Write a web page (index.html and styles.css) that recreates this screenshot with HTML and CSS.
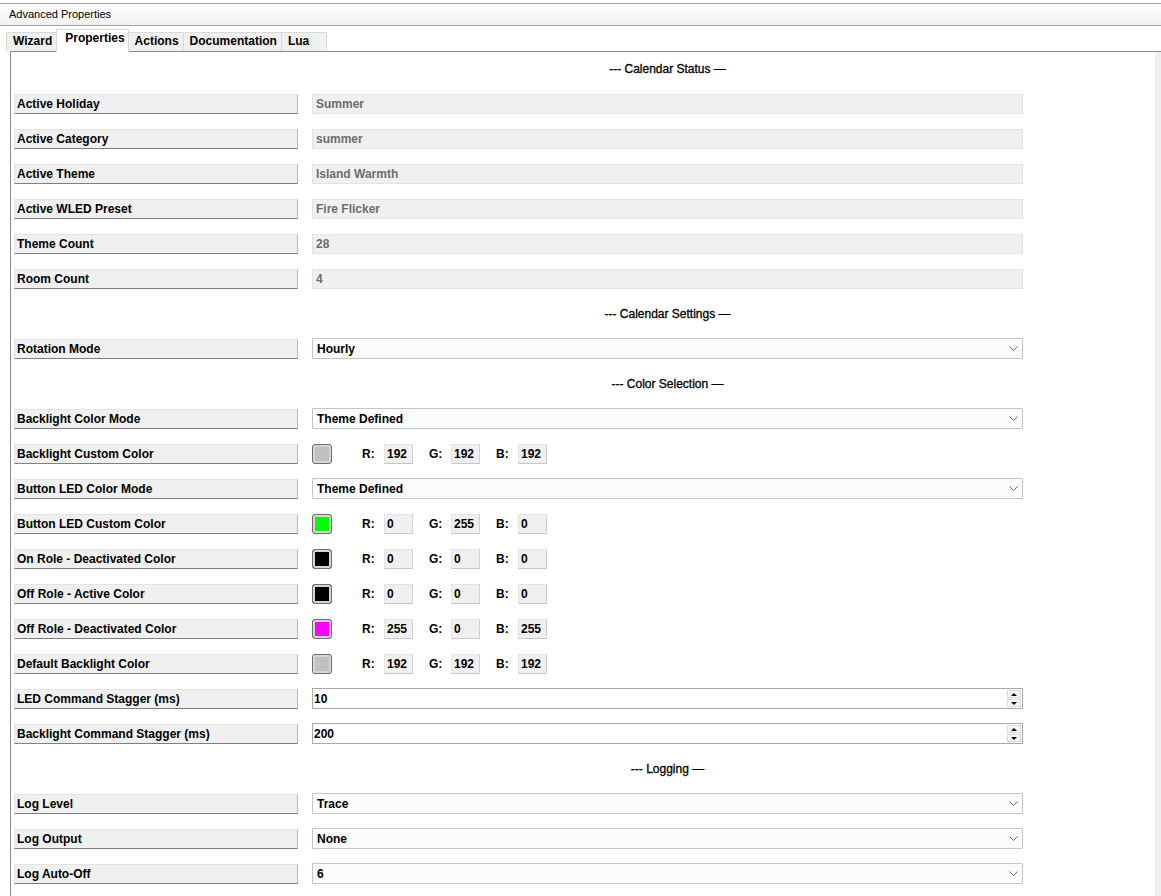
FILE: index.html
```html
<!DOCTYPE html>
<html lang="en">
<head>
  <meta charset="UTF-8" />
  <title>Advanced Properties</title>
  <link rel="stylesheet" href="styles.css">
</head>
<body>
  <div class="titlebar">Advanced Properties</div>

  <div class="tabs">
    <div class="tab">Wizard</div>
    <div class="tab active">Properties</div>
    <div class="tab">Actions</div>
    <div class="tab">Documentation</div>
    <div class="tab tab-lua">Lua</div>
  </div>

  <div class="tabpage">
    <div class="props">
      <!-- Calendar status -->
      <div class="row"><div></div><div class="section">--- Calendar Status —</div></div>
      <div class="row"><div class="label">Active Holiday</div><div class="field">Summer</div></div>
      <div class="row"><div class="label">Active Category</div><div class="field">summer</div></div>
      <div class="row"><div class="label">Active Theme</div><div class="field">Island Warmth</div></div>
      <div class="row"><div class="label">Active WLED Preset</div><div class="field">Fire Flicker</div></div>
      <div class="row"><div class="label">Theme Count</div><div class="field">28</div></div>
      <div class="row"><div class="label">Room Count</div><div class="field">4</div></div>

      <!-- Calendar settings -->
      <div class="row"><div></div><div class="section">--- Calendar Settings —</div></div>
      <div class="row">
        <div class="label">Rotation Mode</div>
        <div class="select"><span>Hourly</span><svg class="chevron" width="9" height="5" viewBox="0 0 9 5"><polyline points="0.5,0.5 4.5,4.5 8.5,0.5" /></svg></div>
      </div>

      <!-- Colors -->
      <div class="row"><div></div><div class="section">--- Color Selection —</div></div>
      <div class="row">
        <div class="label">Backlight Color Mode</div>
        <div class="select"><span>Theme Defined</span><svg class="chevron" width="9" height="5" viewBox="0 0 9 5"><polyline points="0.5,0.5 4.5,4.5 8.5,0.5" /></svg></div>
      </div>
      <div class="row">
        <div class="label">Backlight Custom Color</div>
        <div class="color-value">
          <div class="swatch swatch-silver"></div>
          <span class="ch">R:</span><div class="num">192</div>
          <span class="ch">G:</span><div class="num">192</div>
          <span class="ch">B:</span><div class="num">192</div>
        </div>
      </div>
      <div class="row">
        <div class="label">Button LED Color Mode</div>
        <div class="select"><span>Theme Defined</span><svg class="chevron" width="9" height="5" viewBox="0 0 9 5"><polyline points="0.5,0.5 4.5,4.5 8.5,0.5" /></svg></div>
      </div>
      <div class="row">
        <div class="label">Button LED Custom Color</div>
        <div class="color-value">
          <div class="swatch swatch-green"></div>
          <span class="ch">R:</span><div class="num">0</div>
          <span class="ch">G:</span><div class="num">255</div>
          <span class="ch">B:</span><div class="num">0</div>
        </div>
      </div>
      <div class="row">
        <div class="label">On Role - Deactivated Color</div>
        <div class="color-value">
          <div class="swatch swatch-black"></div>
          <span class="ch">R:</span><div class="num">0</div>
          <span class="ch">G:</span><div class="num">0</div>
          <span class="ch">B:</span><div class="num">0</div>
        </div>
      </div>
      <div class="row">
        <div class="label">Off Role - Active Color</div>
        <div class="color-value">
          <div class="swatch swatch-black"></div>
          <span class="ch">R:</span><div class="num">0</div>
          <span class="ch">G:</span><div class="num">0</div>
          <span class="ch">B:</span><div class="num">0</div>
        </div>
      </div>
      <div class="row">
        <div class="label">Off Role - Deactivated Color</div>
        <div class="color-value">
          <div class="swatch swatch-magenta"></div>
          <span class="ch">R:</span><div class="num">255</div>
          <span class="ch">G:</span><div class="num">0</div>
          <span class="ch">B:</span><div class="num">255</div>
        </div>
      </div>
      <div class="row">
        <div class="label">Default Backlight Color</div>
        <div class="color-value">
          <div class="swatch swatch-silver"></div>
          <span class="ch">R:</span><div class="num">192</div>
          <span class="ch">G:</span><div class="num">192</div>
          <span class="ch">B:</span><div class="num">192</div>
        </div>
      </div>
      <div class="row">
        <div class="label">LED Command Stagger (ms)</div>
        <div class="numeric">
          <span>10</span>
          <div class="spin">
            <div class="spin-btn"><span class="arrow-up"></span></div>
            <div class="spin-btn"><span class="arrow-down"></span></div>
          </div>
        </div>
      </div>
      <div class="row">
        <div class="label">Backlight Command Stagger (ms)</div>
        <div class="numeric">
          <span>200</span>
          <div class="spin">
            <div class="spin-btn"><span class="arrow-up"></span></div>
            <div class="spin-btn"><span class="arrow-down"></span></div>
          </div>
        </div>
      </div>

      <!-- Logging -->
      <div class="row"><div></div><div class="section">--- Logging —</div></div>
      <div class="row">
        <div class="label">Log Level</div>
        <div class="select"><span>Trace</span><svg class="chevron" width="9" height="5" viewBox="0 0 9 5"><polyline points="0.5,0.5 4.5,4.5 8.5,0.5" /></svg></div>
      </div>
      <div class="row">
        <div class="label">Log Output</div>
        <div class="select"><span>None</span><svg class="chevron" width="9" height="5" viewBox="0 0 9 5"><polyline points="0.5,0.5 4.5,4.5 8.5,0.5" /></svg></div>
      </div>
      <div class="row">
        <div class="label">Log Auto-Off</div>
        <div class="select"><span>6</span><svg class="chevron" width="9" height="5" viewBox="0 0 9 5"><polyline points="0.5,0.5 4.5,4.5 8.5,0.5" /></svg></div>
      </div>
    </div>
    <div class="scrollbar"></div>
  </div>
</body>
</html>
```

FILE: styles.css
```css
body {
  margin: 0;
  padding: 0;
  font-family: "Liberation Sans", Arial, sans-serif;
  font-size: 12px;
  color: #000;
  background: #fff;
  height: 896px;
  overflow: hidden;
}

.titlebar {
  margin-top: 3px;
  height: 21px;
  line-height: 21px;
  padding-left: 9px;
  font-size: 11px;
  border-top: 1px solid #a0a0a0;
  border-bottom: 1px solid #a0a0a0;
  background: linear-gradient(#fdfdfd, #f1f1f1);
}

.tabs {
  display: flex;
  align-items: flex-end;
  height: 25px;
  padding-left: 6px;
  position: relative;
  z-index: 2;
}

.tab {
  height: 19px;
  line-height: 17px;
  padding: 0 4px 0 6px;
  font-weight: bold;
  background: #f0f0f0;
  border: 1px solid #d9d9d9;
  border-bottom: none;
  box-sizing: border-box;
  margin-right: -1px;
}

.tab.active {
  height: 23px;
  line-height: 17px;
  padding: 0 3px 0 8px;
  background: #fff;
  margin-bottom: -1px;
  position: relative;
  z-index: 3;
}

.tab-lua {
  width: 46px;
}

.tabpage {
  display: flex;
  margin-left: 10px;
  border-top: 1px solid #8a8a8a;
  border-left: 1px solid #8a8a8a;
  height: 844px;
}

.props {
  flex: 1;
  padding-left: 3px;
}

.scrollbar {
  width: 6px;
  background: #f0f0f0;
}

.row {
  display: grid;
  grid-template-columns: 284px 711px;
  column-gap: 14px;
  align-items: center;
  height: 35px;
  padding-bottom: 2px;
  box-sizing: border-box;
}

.section {
  text-align: center;
  font-size: 12px;
  line-height: 14px;
  -webkit-text-stroke: 0.3px #000;
}

.label {
  height: 20px;
  line-height: 18px;
  box-sizing: border-box;
  padding-left: 2px;
  font-weight: bold;
  background: #f0f0f0;
  border: 1px solid #e3e3e3;
  border-right-color: #b4b4b4;
  border-bottom-color: #7f7f7f;
}

.field {
  height: 20px;
  line-height: 18px;
  box-sizing: border-box;
  padding-left: 3px;
  font-weight: bold;
  color: #6d6d6d;
  background: #f0f0f0;
  border: 1px solid #e3e3e3;
}

.select {
  display: flex;
  align-items: center;
  justify-content: space-between;
  height: 21px;
  box-sizing: border-box;
  padding: 0 4px 0 4px;
  font-weight: bold;
  background: #fcfcfc;
  border: 1px solid #c5c5c5;
  border-radius: 1px;
}

.chevron polyline {
  fill: none;
  stroke: #6a6a6a;
  stroke-width: 1;
}

.numeric {
  display: flex;
  align-items: center;
  justify-content: space-between;
  height: 21px;
  box-sizing: border-box;
  padding: 0 1px 0 1px;
  font-weight: bold;
  background: #fff;
  border: 1px solid #a9a9a9;
}

.spin {
  display: flex;
  flex-direction: column;
  gap: 1px;
}

.spin-btn {
  width: 14px;
  height: 8px;
  box-sizing: border-box;
  background: #f4f4f4;
  border: 1px solid #dadada;
  display: flex;
  align-items: center;
  justify-content: center;
}

.arrow-up {
  width: 0;
  height: 0;
  border-left: 3px solid transparent;
  border-right: 3px solid transparent;
  border-bottom: 3px solid #000;
}

.arrow-down {
  width: 0;
  height: 0;
  border-left: 3px solid transparent;
  border-right: 3px solid transparent;
  border-top: 3px solid #000;
}

.color-value {
  display: flex;
  align-items: center;
  font-weight: bold;
}

.swatch {
  width: 20px;
  height: 20px;
  box-sizing: border-box;
  border: 1px solid #6e6e6e;
  border-radius: 3px;
  box-shadow: inset 0 0 0 2px #d6d6d6;
  margin-right: 30px;
}

.swatch-silver { background: #c0c0c0; }
.swatch-green { background: #00ff00; }
.swatch-black { background: #000; }
.swatch-magenta { background: #ff00ff; }

.ch {
  width: 22px;
}

.num {
  width: 29px;
  height: 20px;
  line-height: 18px;
  box-sizing: border-box;
  padding-left: 2px;
  margin-right: 16px;
  background: #f0f0f0;
  border: 1px solid #e3e3e3;
  border-bottom-color: #c6c6c6;
  border-right-color: #d0d0d0;
}
```
